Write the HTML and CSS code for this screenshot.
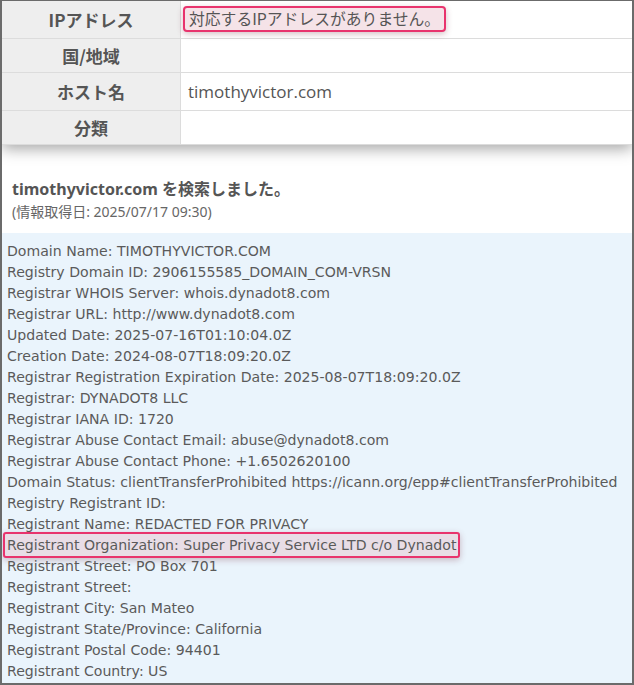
FILE: index.html
```html
<!DOCTYPE html>
<html lang="ja">
<head>
<meta charset="utf-8">
<title>WHOIS</title>
<link rel="stylesheet" href="styles.css">
</head>
<body>
<div class="frame">
  <table class="info">
    <tr class="r1"><th>IPアドレス</th><td><span class="mark">対応するIPアドレスがありません。</span></td></tr>
    <tr class="r2"><th>国/地域</th><td></td></tr>
    <tr class="r3"><th>ホスト名</th><td>timothyvictor.com</td></tr>
    <tr class="r4"><th>分類</th><td></td></tr>
  </table>
  <div class="search">
    <h2 class="title">timothyvictor.com を検索しました。</h2>
    <p class="date">(情報取得日: 2025/07/17 09:30)</p>
  </div>
  <div class="whois">
    <div class="line">Domain Name: TIMOTHYVICTOR.COM</div>
    <div class="line">Registry Domain ID: 2906155585_DOMAIN_COM-VRSN</div>
    <div class="line">Registrar WHOIS Server: whois.dynadot8.com</div>
    <div class="line">Registrar URL: http://www.dynadot8.com</div>
    <div class="line">Updated Date: 2025-07-16T01:10:04.0Z</div>
    <div class="line">Creation Date: 2024-08-07T18:09:20.0Z</div>
    <div class="line">Registrar Registration Expiration Date: 2025-08-07T18:09:20.0Z</div>
    <div class="line">Registrar: DYNADOT8 LLC</div>
    <div class="line">Registrar IANA ID: 1720</div>
    <div class="line">Registrar Abuse Contact Email: abuse@dynadot8.com</div>
    <div class="line">Registrar Abuse Contact Phone: +1.6502620100</div>
    <div class="line">Domain Status: clientTransferProhibited https://icann.org/epp#clientTransferProhibited</div>
    <div class="line">Registry Registrant ID:</div>
    <div class="line">Registrant Name: REDACTED FOR PRIVACY</div>
    <div class="line"><span class="mark2">Registrant Organization: Super Privacy Service LTD c/o Dynadot</span></div>
    <div class="line">Registrant Street: PO Box 701</div>
    <div class="line">Registrant Street:</div>
    <div class="line">Registrant City: San Mateo</div>
    <div class="line">Registrant State/Province: California</div>
    <div class="line">Registrant Postal Code: 94401</div>
    <div class="line">Registrant Country: US</div>
  </div>
</div>
</body>
</html>
```
FILE: styles.css
```css
html, body {
  margin: 0;
  padding: 0;
  background: #fff;
}
body {
  font-family: "Noto Sans", "Noto Sans CJK JP", sans-serif;
  color: #555;
}
.frame {
  width: 634px;
  height: 685px;
  box-sizing: border-box;
  border: 2px solid #6b6b6b;
  border-top-width: 1px;
  overflow: hidden;
  background: #fff;
}
.info {
  width: 100%;
  border-collapse: collapse;
  box-shadow: 0 4px 14px rgba(0,0,0,0.35);
  position: relative;
}
.info th, .info td {
  border-bottom: 1px solid #dcdcdc;
  padding: 0;
}
.info th {
  width: 178px;
  background: #eeeeee;
  border-right: 1px solid #dcdcdc;
  font-weight: bold;
  font-size: 17px;
  color: #555;
  text-align: center;
  font-family: "Noto Sans CJK JP", sans-serif;
}
.info td {
  background: #fff;
  font-size: 17px;
  color: #555;
  padding-left: 7px;
  font-family: "Open Sans", "Noto Sans CJK JP", sans-serif;
}
.info tr.r1 { height: 37px; }
.info tr.r2 { height: 34px; }
.info tr.r3 { height: 38px; }
.info tr.r4 { height: 34px; }
.info tr.r1 td { vertical-align: top; padding-top: 5px; }
.mark {
  display: inline-block;
  padding: 0 4px;
  line-height: 22px;
  border: 2px solid #e8336d;
  border-radius: 4px;
  background: #f5e3e8;
  box-shadow: 0 2px 6px rgba(120,40,60,0.3);
  font-family: "Noto Sans CJK JP", sans-serif;
  font-size: 15.8px;
  margin-left: -5px;
}
.search {
  padding: 33px 10px 11px 10px;
}
.title {
  margin: 0;
  font-size: 16px;
  font-weight: bold;
  line-height: 22px;
  color: #555;
  font-family: "Noto Sans", "Noto Sans CJK JP", sans-serif;
}
.date {
  margin: 2px 0 0 0;
  font-size: 14px;
  line-height: 20px;
  color: #666;
  font-family: "Noto Sans", "Noto Sans CJK JP", sans-serif;
}
.whois {
  background: #eaf4fc;
  padding: 8px 0 0 5px;
  height: 470px;
  font-family: "DejaVu Sans", sans-serif;
  font-size: 14.1px;
  color: #5a5a5a;
}
.line {
  line-height: 21px;
  height: 21px;
  white-space: nowrap;
}
.mark2 {
  display: inline-block;
  margin: -3px 0 -2px -4px;
  padding: 0 2px;
  line-height: 22px;
  border: 2px solid #e8336d;
  border-radius: 3px;
  background: #e8dde6;
  box-shadow: 0 2px 6px rgba(120,40,60,0.3);
}
```
